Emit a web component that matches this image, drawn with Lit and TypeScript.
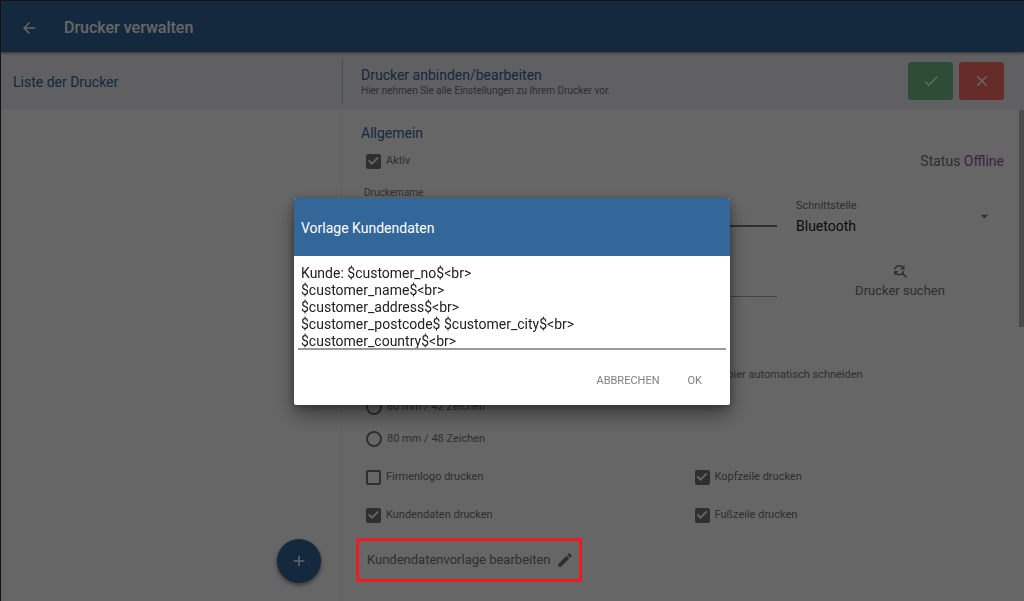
import { LitElement, html, css, svg } from "lit";
import { customElement, state } from "lit/decorators.js";

const TEMPLATE = [
  "Kunde: $customer_no$<br>",
  "$customer_name$<br>",
  "$customer_address$<br>",
  "$customer_postcode$ $customer_city$<br>",
  "$customer_country$<br>",
].join("\n");

const icon = (path: unknown, size: number) => html`
  <svg width=${size} height=${size} viewBox="0 0 24 24" fill="currentColor" aria-hidden="true">${path}</svg>
`;

const ICONS = {
  back: svg`<path d="M20 11H7.83l5.59-5.59L12 4l-8 8 8 8 1.41-1.41L7.83 13H20v-2z"/>`,
  check: svg`<path d="M9 16.17L4.83 12l-1.42 1.41L9 19 21 7l-1.41-1.41z"/>`,
  close: svg`<path d="M19 6.41L17.59 5 12 10.59 6.41 5 5 6.41 10.59 12 5 17.59 6.41 19 12 13.41 17.59 19 19 17.59 13.41 12z"/>`,
  plus: svg`<path d="M19 13h-6v6h-2v-6H5v-2h6V5h2v6h6v2z"/>`,
  caret: svg`<path d="M4 6l8 8 8-8z"/>`,
  pencil: svg`<path d="M3 17.25V21h3.75L17.81 9.94l-3.75-3.75L3 17.25zM20.71 7.04c.39-.39.39-1.02 0-1.41l-2.34-2.34c-.39-.39-1.02-.39-1.41 0l-1.83 1.83 3.75 3.75 1.83-1.83z"/>`,
  search: svg`<path d="M11 6c1.38 0 2.63.56 3.54 1.46L12 10h6V4l-2.05 2.05C14.68 4.78 12.93 4 11 4c-3.53 0-6.43 2.61-6.92 6H6.1c.46-2.28 2.48-4 4.9-4zm5.64 9.14c.66-.9 1.12-1.97 1.28-3.14H15.9c-.46 2.28-2.48 4-4.9 4-1.38 0-2.63-.56-3.54-1.46L10 12H4v6l2.05-2.05C7.32 17.22 9.07 18 11 18c1.55 0 2.98-.51 4.14-1.36L20 21.49 21.49 20l-4.85-4.86z"/>`,
};

@customElement("app-root")
export class AppRoot extends LitElement {
  @state() private dialogOpen = true;

  static styles = css`
    :host {
      display: flex;
      flex-direction: column;
      position: relative;
      box-sizing: border-box;
      height: 100vh;
      overflow: hidden;
      border: 1px solid #303030;
      border-width: 1px 0 0 1px;
      background: #fff;
      color: #757575;
      font-family: Roboto, "Liberation Sans", sans-serif;
      font-size: 11px;
      line-height: 16px;
    }
    *, *::before, *::after { box-sizing: border-box; }
    button, input, select, textarea {
      margin: 0;
      padding: 0;
      border: 0;
      border-radius: 0;
      background: none;
      color: inherit;
      font: inherit;
      outline: none;
    }
    svg { display: block; flex: none; }
    h1, h2, p { margin: 0; font-weight: 400; }

    .bar {
      display: flex;
      align-items: center;
      gap: 26px;
      flex: none;
      height: 51px;
      padding: 2px 19px 0;
      background: #336699;
      color: #fff;
      box-shadow: 0 1px 3px rgba(0, 0, 0, 0.5);
      z-index: 1;
    }
    .bar h1 { font-size: 16px; font-weight: 500; line-height: 20px; }

    .body {
      display: grid;
      grid-template-columns: 1fr 2fr;
      flex: 1;
      min-height: 0;
    }
    .pane { display: flex; flex-direction: column; min-width: 0; min-height: 0; position: relative; }
    .pane-list { border-right: 1px solid #f0f0f0; }
    .head {
      display: flex;
      align-items: center;
      flex: none;
      height: 58px;
      background: #f0f0f5;
    }
    .head-list { padding: 2px 12px 0; }
    .head-edit { padding: 0 20px 0 0; gap: 6px; }
    .title { color: #336699; font-size: 14px; line-height: 18px; }
    .intro {
      flex: 1;
      display: flex;
      flex-direction: column;
      justify-content: center;
      height: 46px;
      padding: 2px 0 0 18px;
      border-left: 1px solid #a0c8f0;
    }
    .hint { font-size: 10px; line-height: 14px; }
    .action {
      display: grid;
      place-items: center;
      width: 45px;
      height: 38px;
      border-radius: 3px;
      color: #fff;
    }
    .ok { background: #74c088; }
    .cancel { background: #ff6e66; }

    .fab {
      position: absolute;
      right: 20px;
      bottom: 18px;
      display: grid;
      place-items: center;
      width: 44px;
      height: 44px;
      border-radius: 50%;
      background: #336699;
      color: #fff;
      box-shadow: 0 2px 4px rgba(0, 0, 0, 0.5);
    }

    .form { flex: 1; min-height: 0; overflow: hidden; padding: 12px 20px 0 19px; }
    .thumb { position: absolute; top: 58px; right: 0; width: 5px; height: 217px; background: #b8b8b8; }
    .line { display: flex; align-items: center; justify-content: space-between; height: 34px; }
    .status { font-size: 14px; }
    .offline { color: #a050b0; }
    .section { color: #336699; font-size: 14px; line-height: 22px; }

    .choice { display: flex; align-items: center; gap: 5px; padding-left: 5px; }
    .mark {
      appearance: none;
      display: grid;
      place-items: center;
      width: 15px;
      height: 15px;
      border: 2px solid #757575;
      border-radius: 2px;
    }
    .mark[type="radio"] { width: 16px; height: 16px; border-radius: 50%; }
    .mark[type="checkbox"]:checked { background: #757575; }
    .mark[type="checkbox"]:checked::before {
      content: "";
      width: 11px;
      height: 9px;
      background: #fff;
      clip-path: polygon(0 50%, 12% 36%, 36% 64%, 88% 4%, 100% 18%, 36% 94%);
    }

    .fields { display: grid; grid-template-columns: 2fr 1fr; column-gap: 19px; padding-top: 7px; }
    .field { display: flex; flex-direction: column; padding-left: 3px; font-size: 10px; }
    .text { height: 26px; margin-left: -3px; border-bottom: 2px solid #757575; font-size: 14px; }
    .text-quiet { height: 43px; border-bottom: 1px solid #a8a8a8; }
    .picker { display: flex; align-items: center; justify-content: space-between; padding: 13px 14px 0 0; }
    .picker-main { display: flex; flex-direction: column; flex: 1; gap: 1px; }
    .select { appearance: none; height: 22px; color: #212121; font-size: 14px; }
    .second { padding-top: 17px; }
    .search {
      display: flex;
      flex-direction: column;
      align-items: center;
      gap: 2px;
      padding-top: 25px;
      font-size: 13px;
      line-height: 18px;
    }

    .options { display: grid; grid-template-columns: 1fr 1fr; column-gap: 14px; }
    .widths { grid-auto-rows: 32px; margin-top: 59px; }
    .prints { grid-auto-rows: 38px; margin-top: 3px; }
    .start { grid-column: 1; }

    .edit {
      position: relative;
      display: flex;
      align-items: center;
      gap: 5px;
      height: 44px;
      margin-top: 4px;
      padding: 0 3px 0 6px;
      font-size: 13px;
    }
    .edit::after {
      content: "";
      position: absolute;
      inset: 0 -5px;
      border: 3px solid #ed1c24;
      z-index: 3;
    }

    .backdrop {
      position: fixed;
      inset: 0;
      z-index: 2;
      display: grid;
      place-items: center;
      padding-top: 2px;
      background: rgba(0, 0, 0, 0.6);
    }
    .dialog {
      display: flex;
      flex-direction: column;
      width: 436px;
      max-width: 90%;
      overflow: hidden;
      border-radius: 2px;
      background: #fff;
      box-shadow: 0 10px 20px rgba(0, 0, 0, 0.4), 0 2px 8px rgba(0, 0, 0, 0.3);
    }
    .dialog-title {
      padding: 20px 7px 18px;
      background: #336699;
      color: #fff;
      font-size: 14px;
      line-height: 20px;
    }
    .editor {
      display: block;
      height: 94px;
      margin: 0 4px;
      padding: 9px 3px 0;
      border-bottom: 2px solid #9a9a9a;
      resize: none;
      overflow: hidden;
      color: #212121;
      font-size: 14px;
      line-height: 17px;
    }
    .buttons { display: flex; justify-content: flex-end; gap: 28px; padding: 20px 28px 14px; }
    .flat { height: 21px; color: #808080; }
  `;

  private check(id: string, label: string, checked: boolean) {
    return html`
      <div class="choice">
        <input class="mark" type="checkbox" id=${id} ?checked=${checked} />
        <label for=${id}>${label}</label>
      </div>
    `;
  }

  private radio(id: string, label: string) {
    return html`
      <div class="choice start">
        <input class="mark" type="radio" name="width" id=${id} />
        <label for=${id}>${label}</label>
      </div>
    `;
  }

  private close = () => {
    this.dialogOpen = false;
  };

  private open = () => {
    this.dialogOpen = true;
  };

  render() {
    return html`
      <header class="bar">
        <button aria-label="Zurück">${icon(ICONS.back, 18)}</button>
        <h1>Drucker verwalten</h1>
      </header>

      <main class="body">
        <section class="pane pane-list">
          <div class="head head-list"><h2 class="title">Liste der Drucker</h2></div>
          <button class="fab" aria-label="Hinzufügen">${icon(ICONS.plus, 18)}</button>
        </section>

        <section class="pane">
          <div class="head head-edit">
            <div class="intro">
              <h2 class="title">Drucker anbinden/bearbeiten</h2>
              <p class="hint">Hier nehmen Sie alle Einstellungen zu Ihrem Drucker vor.</p>
            </div>
            <button class="action ok" aria-label="Speichern">${icon(ICONS.check, 18)}</button>
            <button class="action cancel" aria-label="Verwerfen">${icon(ICONS.close, 18)}</button>
          </div>

          <div class="form">
            <h2 class="section">Allgemein</h2>
            <div class="line">
              ${this.check("active", "Aktiv", true)}
              <span class="status">Status <span class="offline">Offline</span></span>
            </div>

            <div class="fields">
              <div class="field">
                <label for="name">Druckername</label>
                <input class="text" id="name" type="text" />
              </div>
              <div class="picker">
                <div class="picker-main">
                  <label for="port">Schnittstelle</label>
                  <select class="select" id="port"><option>Bluetooth</option></select>
                </div>
                ${icon(ICONS.caret, 11)}
              </div>
              <div class="field second">
                <input class="text text-quiet" type="text" aria-label="Adresse" />
              </div>
              <button class="search">${icon(ICONS.search, 18)}<span>Drucker suchen</span></button>
            </div>

            <div class="options widths">
              ${this.radio("w32", "58 mm / 32 Zeichen")}
              ${this.check("cut", "Papier automatisch schneiden", true)}
              ${this.radio("w42", "80 mm / 42 Zeichen")}
              ${this.radio("w48", "80 mm / 48 Zeichen")}
            </div>
            <div class="options prints">
              ${this.check("logo", "Firmenlogo drucken", false)}
              ${this.check("header", "Kopfzeile drucken", true)}
              ${this.check("customer", "Kundendaten drucken", true)}
              ${this.check("footer", "Fußzeile drucken", true)}
            </div>
            <button class="edit" @click=${this.open}>
              <span>Kundendatenvorlage bearbeiten</span>${icon(ICONS.pencil, 18)}
            </button>
          </div>
          <div class="thumb"></div>
        </section>
      </main>

      ${this.dialogOpen
        ? html`
            <div class="backdrop">
              <div class="dialog" role="dialog" aria-modal="true" aria-labelledby="dialog-title">
                <label class="dialog-title" id="dialog-title" for="template">Vorlage Kundendaten</label>
                <textarea class="editor" id="template" spellcheck="false" .value=${TEMPLATE}></textarea>
                <div class="buttons">
                  <button class="flat" @click=${this.close}>ABBRECHEN</button>
                  <button class="flat" @click=${this.close}>OK</button>
                </div>
              </div>
            </div>
          `
        : ""}
    `;
  }
}
